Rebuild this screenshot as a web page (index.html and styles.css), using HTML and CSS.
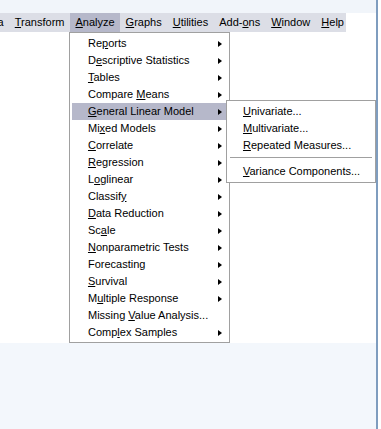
FILE: index.html
```html
<!DOCTYPE html>
<html lang="en">
<head>
    <meta charset="UTF-8">
    <meta name="viewport" content="width=device-width, initial-scale=1.0">
    <title>Analyze Menu</title>
    <link rel="stylesheet" href="styles.css">
</head>
<body>

<div class="window">
    <div class="toolbar-strip"></div>

    <div class="menubar">
        <div class="menubar-item">Data</div>
        <div class="menubar-item"><u>T</u>ransform</div>
        <div class="menubar-item open"><u>A</u>nalyze
            <div class="menu">
                <div class="menu-item"><span>Re<u>p</u>orts</span><i class="arrow"></i></div>
                <div class="menu-item"><span>D<u>e</u>scriptive Statistics</span><i class="arrow"></i></div>
                <div class="menu-item"><span><u>T</u>ables</span><i class="arrow"></i></div>
                <div class="menu-item"><span>Compare <u>M</u>eans</span><i class="arrow"></i></div>
                <div class="menu-item active"><span><u>G</u>eneral Linear Model</span><i class="arrow"></i>
                    <div class="submenu">
                        <div class="menu-item"><span><u>U</u>nivariate...</span></div>
                        <div class="menu-item"><span><u>M</u>ultivariate...</span></div>
                        <div class="menu-item"><span><u>R</u>epeated Measures...</span></div>
                        <div class="separator"></div>
                        <div class="menu-item"><span><u>V</u>ariance Components...</span></div>
                    </div>
                </div>
                <div class="menu-item"><span>Mi<u>x</u>ed Models</span><i class="arrow"></i></div>
                <div class="menu-item"><span><u>C</u>orrelate</span><i class="arrow"></i></div>
                <div class="menu-item"><span><u>R</u>egression</span><i class="arrow"></i></div>
                <div class="menu-item"><span>L<u>o</u>glinear</span><i class="arrow"></i></div>
                <div class="menu-item"><span>Classif<u>y</u></span><i class="arrow"></i></div>
                <div class="menu-item"><span><u>D</u>ata Reduction</span><i class="arrow"></i></div>
                <div class="menu-item"><span>Sc<u>a</u>le</span><i class="arrow"></i></div>
                <div class="menu-item"><span><u>N</u>onparametric Tests</span><i class="arrow"></i></div>
                <div class="menu-item"><span>Forecasting</span><i class="arrow"></i></div>
                <div class="menu-item"><span><u>S</u>urvival</span><i class="arrow"></i></div>
                <div class="menu-item"><span>M<u>u</u>ltiple Response</span><i class="arrow"></i></div>
                <div class="menu-item"><span>Missing <u>V</u>alue Analysis...</span></div>
                <div class="menu-item"><span>Comp<u>l</u>ex Samples</span><i class="arrow"></i></div>
            </div>
        </div>
        <div class="menubar-item"><u>G</u>raphs</div>
        <div class="menubar-item"><u>U</u>tilities</div>
        <div class="menubar-item">Add-<u>o</u>ns</div>
        <div class="menubar-item"><u>W</u>indow</div>
        <div class="menubar-item"><u>H</u>elp</div>
    </div>

    <div class="workspace"></div>
    <div class="status-band"></div>
</div>

</body>
</html>
```

FILE: styles.css
```css
body {
    margin: 0;
    background-color: #ffffff;
    font-family: "Liberation Sans", Arial, sans-serif;
    font-size: 11px;
    color: #000000;
    overflow: hidden;
}
.window {
    width: 376px;
    height: 429px;
    border-right: 2px solid #7f9dbf;
    display: flex;
    flex-direction: column;
}
.toolbar-strip {
    height: 13px;
    background-color: #f1f5fa;
}
.menubar {
    display: flex;
    width: 371px;
    height: 19px;
    margin-left: -25px;
    background-color: #dcdee6;
    line-height: 19px;
}
.menubar-item {
    position: relative;
    padding: 0 5.5px;
    white-space: nowrap;
}
.menubar-item.open {
    background-color: #b6b8ca;
}
.workspace {
    height: 311px;
    background-color: #ffffff;
}
.status-band {
    flex: 1;
    background-color: #f3f7fc;
}

/* dropdown menus */
.menu {
    position: absolute;
    top: 100%;
    left: -1px;
    width: 155px;
    padding: 2px 2px 1px;
    background-color: #ffffff;
    border: 1px solid #a0a0a0;
    z-index: 10;
}
.menu-item {
    position: relative;
    display: flex;
    justify-content: space-between;
    align-items: center;
    height: 17px;
    line-height: 17px;
    padding: 0 5px 0 16px;
    white-space: nowrap;
}
.menu-item.active {
    background-color: #b6b8ca;
}
.arrow {
    width: 0;
    height: 0;
    border-left: 4px solid #000000;
    border-top: 3.5px solid transparent;
    border-bottom: 3.5px solid transparent;
}
.submenu {
    position: absolute;
    top: -3px;
    left: calc(100% - 1px);
    width: 144px;
    padding: 2px;
    background-color: #ffffff;
    border: 1px solid #a0a0a0;
    z-index: 11;
}
.submenu .menu-item {
    padding-left: 14px;
}
.separator {
    margin: 3px 1px 5px;
    border-top: 1px solid #a0a0a0;
}
```
